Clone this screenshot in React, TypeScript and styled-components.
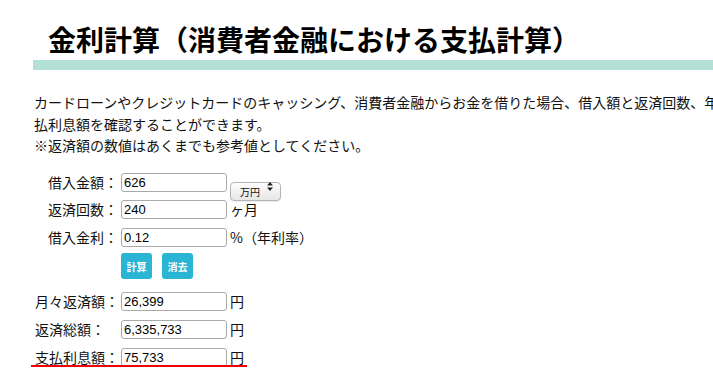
import React from 'react';
import styled, { createGlobalStyle } from 'styled-components';

const GlobalStyle = createGlobalStyle`
  html, body {
    margin: 0;
    padding: 0;
    overflow: hidden;
    background: #fff;
  }
  body {
    font-family: "Noto Sans CJK JP", "Noto Sans", sans-serif;
    color: #111;
  }
`;

const Page = styled.div`
  padding-left: 33px;
  width: 1100px;
`;

const Title = styled.h1`
  margin: 0;
  padding: 22px 15px 4px;
  font-size: 28px;
  line-height: 34px;
  font-weight: 700;
  color: #000;
  border-bottom: 10px solid #b3e1d6;
`;

const Lead = styled.p`
  margin: 22px 0 0 1px;
  font-size: 14px;
  line-height: 21.5px;
  white-space: nowrap;
  color: #111;
`;

const Form = styled.div`
  display: flex;
  flex-direction: column;
  gap: 8.5px;
  margin-top: 16px;
  padding-left: 15px;
`;

const Results = styled.div`
  display: flex;
  flex-direction: column;
  gap: 9px;
  margin-top: 13px;
  padding-left: 2px;
`;

const Row = styled.div<{ $label: number }>`
  position: relative;
  display: grid;
  grid-template-columns: ${(p) => p.$label}px 106px auto;
  grid-template-rows: 19px;
  align-items: center;
  column-gap: 3px;
  height: 19px;
`;

const Label = styled.span`
  font-size: 14px;
  line-height: 19px;
  white-space: nowrap;
  color: #111;
`;

const Field = styled.input`
  box-sizing: border-box;
  width: 106px;
  height: 19px;
  margin: 0;
  padding: 0 2px;
  border: 1px solid #a9a9a9;
  border-radius: 3px;
  font-family: "Liberation Sans", Arial, sans-serif;
  font-size: 13px;
  color: #000;
  background: #fff;
  outline: none;
`;

const Suffix = styled.span`
  font-size: 14px;
  line-height: 19px;
  white-space: nowrap;
  color: #111;
`;

const SelectWrap = styled.span`
  position: relative;
  align-self: start;
  display: inline-block;
  width: 51px;
  height: 19px;
  margin-top: 4px;
`;

const UnitSelect = styled.select`
  box-sizing: border-box;
  appearance: none;
  width: 51px;
  height: 19px;
  margin: 0;
  padding: 0 0 0 9px;
  border: 1px solid #b4b4b4;
  border-radius: 4px;
  background: linear-gradient(#fdfdfd, #e6e6e6);
  box-shadow: 0 1px 1px rgba(0, 0, 0, 0.08);
  font-family: "Noto Sans CJK JP", sans-serif;
  font-size: 10px;
  color: #111;
  outline: none;
`;

const SelectArrows = styled.svg`
  position: absolute;
  right: 8px;
  top: 5px;
  pointer-events: none;
`;

const Buttons = styled.div`
  display: flex;
  gap: 10px;
  margin-top: -2px;
  padding-left: 73px;
`;

const ActionButton = styled.button`
  width: 31px;
  height: 26px;
  padding: 0;
  border: none;
  border-radius: 3px;
  background: #2ab5d4;
  color: #fff;
  font-family: "Noto Sans CJK JP", sans-serif;
  font-size: 10px;
  font-weight: 700;
  cursor: pointer;
`;

const Highlight = styled.div`
  position: absolute;
  left: -4px;
  top: 17px;
  width: 216px;
  height: 4px;
  background: #f00000;
  box-shadow: 0 2px 2px rgba(0, 0, 0, 0.4);
`;

const Selector = () => (
  <SelectWrap>
    <UnitSelect defaultValue="man">
      <option value="man">万円</option>
      <option value="yen">円</option>
    </UnitSelect>
    <SelectArrows width="6" height="9" viewBox="0 0 6 9">
      <path d="M3 0 L6 3.5 L0 3.5 Z M0 5.5 L6 5.5 L3 9 Z" fill="#222" />
    </SelectArrows>
  </SelectWrap>
);

export default function App() {
  return (
    <>
      <GlobalStyle />
      <Page>
        <Title>金利計算（消費者金融における支払計算）</Title>
        <Lead>
          カードローンやクレジットカードのキャッシング、消費者金融からお金を借りた場合、借入額と返済回数、年利率を入力すると、月々の返済額と返済総額、支
          <br />
          払利息額を確認することができます。
          <br />
          ※返済額の数値はあくまでも参考値としてください。
        </Lead>
        <Form>
          <Row $label={70}>
            <Label>借入金額：</Label>
            <Field defaultValue="626" />
            <Selector />
          </Row>
          <Row $label={70}>
            <Label>返済回数：</Label>
            <Field defaultValue="240" />
            <Suffix>ヶ月</Suffix>
          </Row>
          <Row $label={70}>
            <Label>借入金利：</Label>
            <Field defaultValue="0.12" />
            <Suffix>%（年利率）</Suffix>
          </Row>
          <Buttons>
            <ActionButton>計算</ActionButton>
            <ActionButton>消去</ActionButton>
          </Buttons>
        </Form>
        <Results>
          <Row $label={83}>
            <Label>月々返済額：</Label>
            <Field defaultValue="26,399" />
            <Suffix>円</Suffix>
          </Row>
          <Row $label={83}>
            <Label>返済総額：</Label>
            <Field defaultValue="6,335,733" />
            <Suffix>円</Suffix>
          </Row>
          <Row $label={83}>
            <Label>支払利息額：</Label>
            <Field defaultValue="75,733" />
            <Suffix>円</Suffix>
            <Highlight />
          </Row>
        </Results>
      </Page>
    </>
  );
}
